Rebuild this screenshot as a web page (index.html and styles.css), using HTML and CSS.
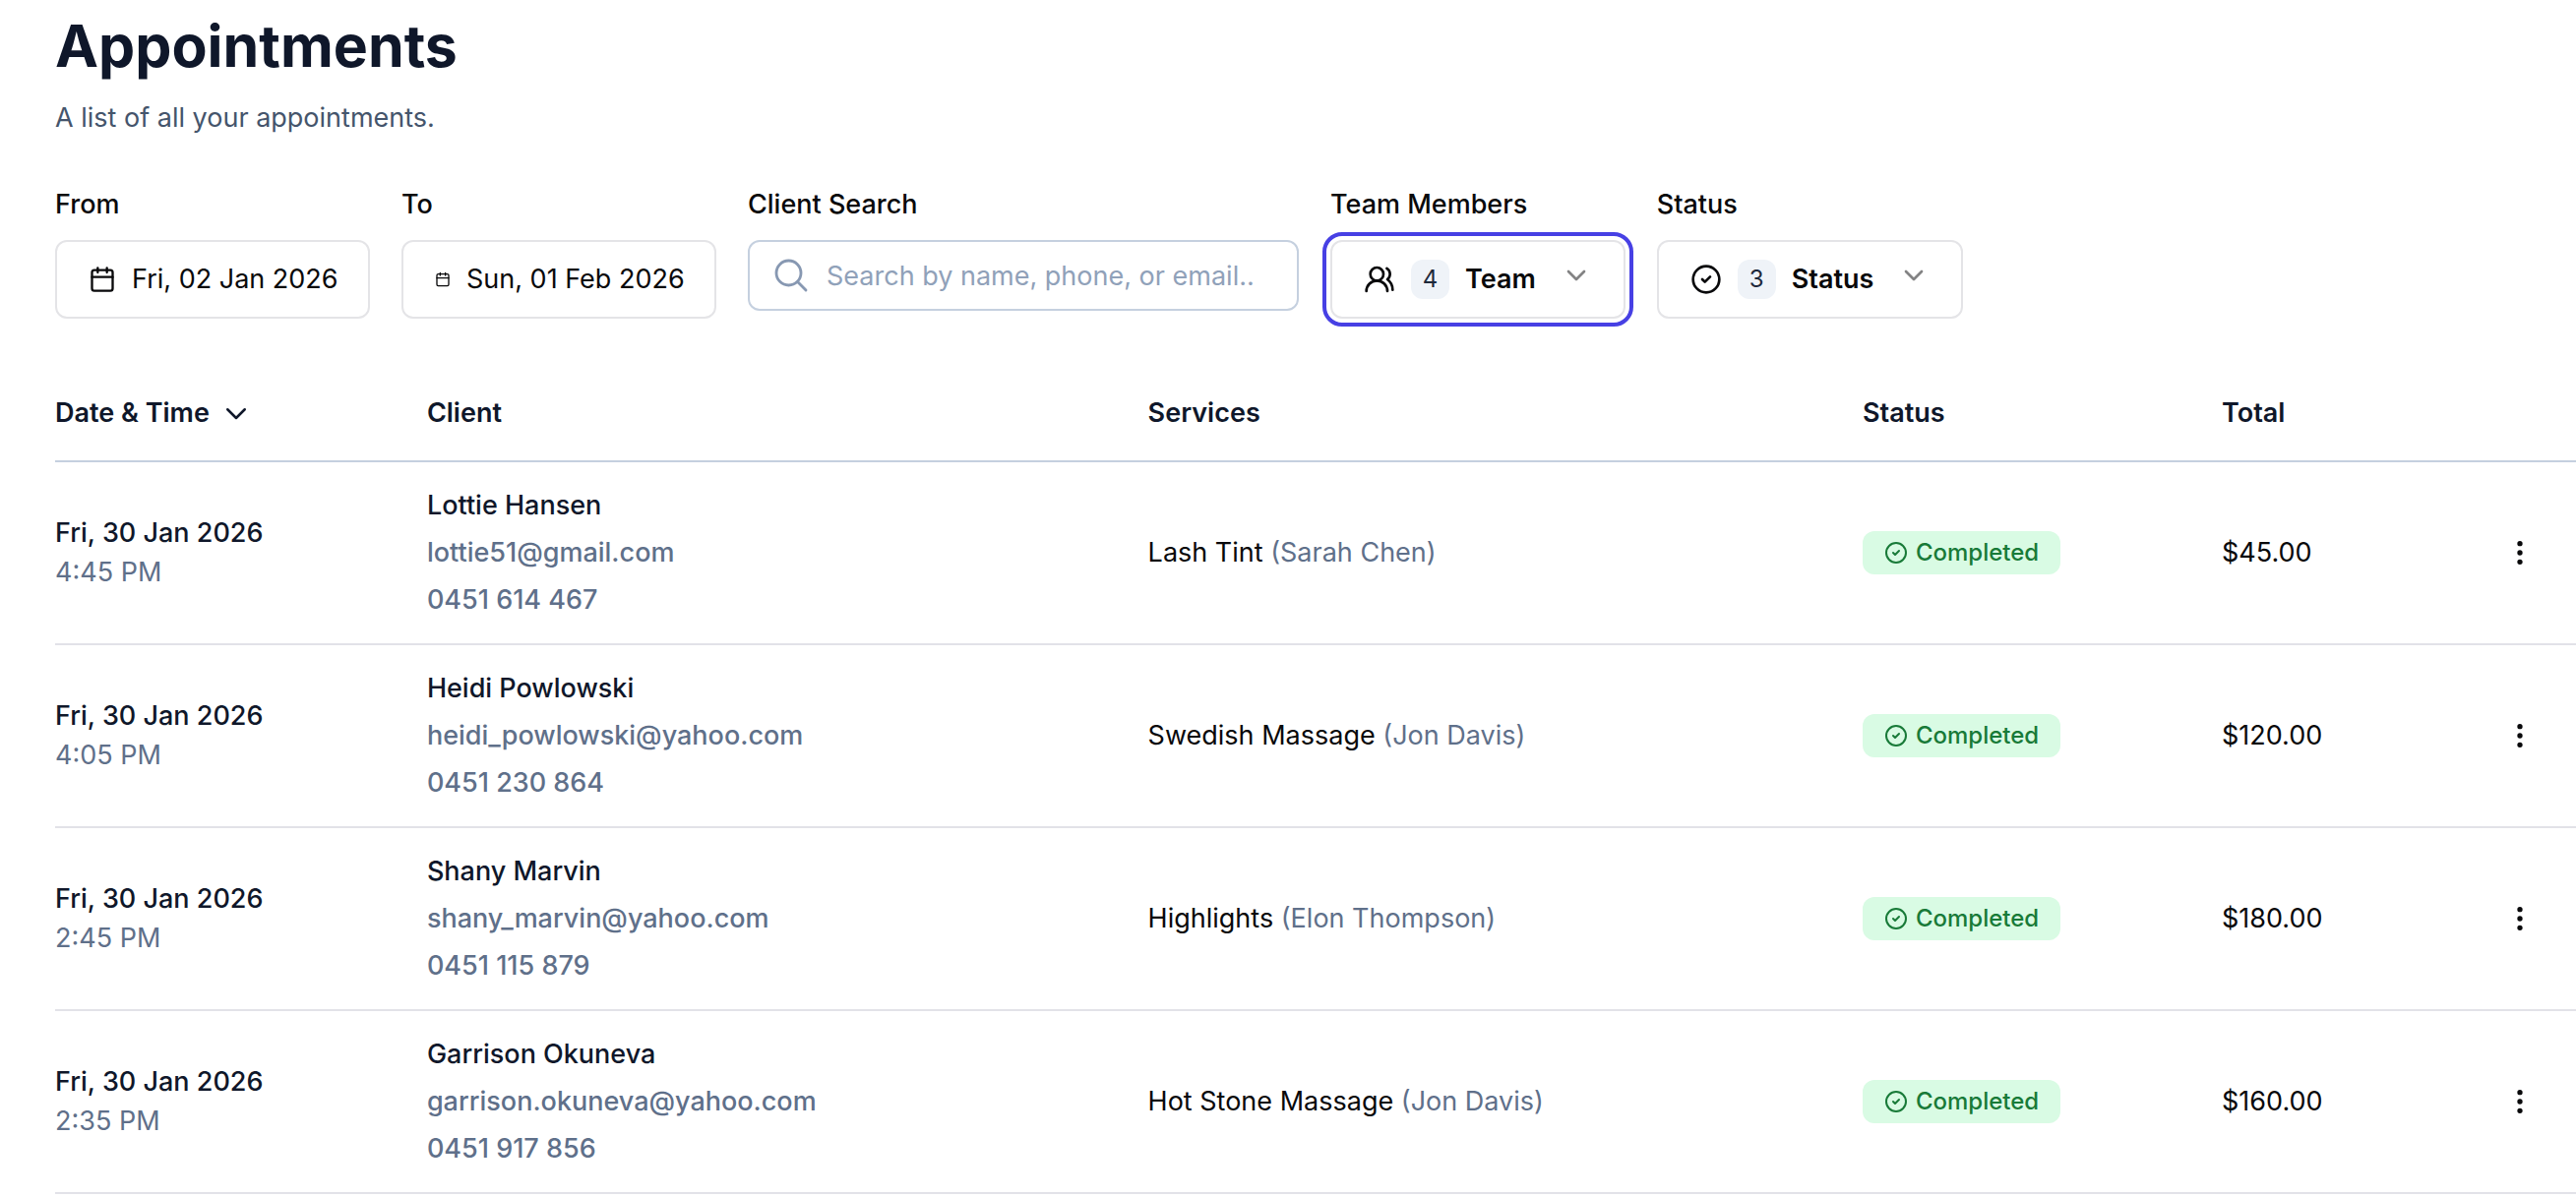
FILE: index.html
```
<!DOCTYPE html>
<html lang="en">
	<head>
		<meta charset="UTF-8">
		<title>Appointments</title>
		<link rel="stylesheet" href="styles.css">
	</head>
	<body>
		<!-- shared icons -->
		<svg class="sprite" aria-hidden="true">
			<symbol id="i-calendar" viewBox="0 0 24 24">
				<path d="M8 2v4M16 2v4M3 10h18"/>
				<rect x="3" y="4" width="18" height="18" rx="2"/>
			</symbol>
			<symbol id="i-search" viewBox="0 0 24 24">
				<path d="m21 21-5.197-5.197m0 0A7.5 7.5 0 1 0 5.196 5.196a7.5 7.5 0 0 0 10.607 10.607Z"/>
			</symbol>
			<symbol id="i-users" viewBox="0 0 24 24">
				<path d="M18 21a8 8 0 0 0-16 0"/>
				<circle cx="10" cy="8" r="5"/>
				<path d="M22 20c0-3.37-2-6.5-4-8a5 5 0 0 0-.45-8.3"/>
			</symbol>
			<symbol id="i-check" viewBox="0 0 24 24">
				<circle cx="12" cy="12" r="10"/>
				<path d="m9 12 2 2 4-4"/>
			</symbol>
			<symbol id="i-down" viewBox="0 0 24 24">
				<path d="m6 9 6 6 6-6"/>
			</symbol>
			<symbol id="i-sort" viewBox="0 0 24 24">
				<path d="m5 9 7 7 7-7"/>
			</symbol>
			<symbol id="i-dots" viewBox="0 0 24 24">
				<circle cx="12" cy="5" r="1"/>
				<circle cx="12" cy="12" r="1"/>
				<circle cx="12" cy="19" r="1"/>
			</symbol>
		</svg>

		<main class="page">
			<h1>Appointments</h1>
			<p class="intro">A list of all your appointments.</p>

			<form class="filters">
				<div class="field">
					<label for="from">From</label>
					<button type="button" id="from" class="btn date">
						<svg class="icon icon-cal"><use href="#i-calendar"/></svg>
						Fri, 02 Jan 2026
					</button>
				</div>
				<div class="field">
					<label for="to">To</label>
					<button type="button" id="to" class="btn date">
						<svg class="icon icon-small"><use href="#i-calendar"/></svg>
						Sun, 01 Feb 2026
					</button>
				</div>
				<div class="field">
					<label for="search">Client Search</label>
					<div class="search">
						<svg class="icon icon-search"><use href="#i-search"/></svg>
						<input type="text" id="search" placeholder="Search by name, phone, or email..">
					</div>
				</div>
				<div class="field">
					<label for="team">Team Members</label>
					<button type="button" id="team" class="btn drop focused">
						<svg class="icon"><use href="#i-users"/></svg>
						<span class="count">4</span>
						<span class="name">Team</span>
						<svg class="icon arrow"><use href="#i-down"/></svg>
					</button>
				</div>
				<div class="field">
					<label for="status">Status</label>
					<button type="button" id="status" class="btn drop">
						<svg class="icon"><use href="#i-check"/></svg>
						<span class="count">3</span>
						<span class="name">Status</span>
						<svg class="icon arrow"><use href="#i-down"/></svg>
					</button>
				</div>
			</form>

			<table class="list">
				<thead>
					<tr>
						<th class="c-date">
							<button type="button" class="sort">Date &amp; Time
								<svg class="icon"><use href="#i-sort"/></svg>
							</button>
						</th>
						<th class="c-client">Client</th>
						<th class="c-services">Services</th>
						<th class="c-status">Status</th>
						<th class="c-total">Total</th>
						<th class="c-menu"></th>
					</tr>
				</thead>
				<tbody>
					<tr>
						<td><div class="day">Fri, 30 Jan 2026</div><div class="time">4:45 PM</div></td>
						<td class="client">
							<div>Lottie Hansen</div>
							<a href="mailto:lottie51@gmail.com">lottie51@gmail.com</a>
							<a href="tel:0451614467">0451 614 467</a>
						</td>
						<td>Lash Tint <span class="staff">(Sarah Chen)</span></td>
						<td><span class="tag"><svg class="icon"><use href="#i-check"/></svg>Completed</span></td>
						<td>$45.00</td>
						<td><button type="button" class="menu" aria-label="Actions"><svg class="icon"><use href="#i-dots"/></svg></button></td>
					</tr>
					<tr>
						<td><div class="day">Fri, 30 Jan 2026</div><div class="time">4:05 PM</div></td>
						<td class="client">
							<div>Heidi Powlowski</div>
							<a href="mailto:heidi_powlowski@yahoo.com">heidi_powlowski@yahoo.com</a>
							<a href="tel:0451230864">0451 230 864</a>
						</td>
						<td>Swedish Massage <span class="staff">(Jon Davis)</span></td>
						<td><span class="tag"><svg class="icon"><use href="#i-check"/></svg>Completed</span></td>
						<td>$120.00</td>
						<td><button type="button" class="menu" aria-label="Actions"><svg class="icon"><use href="#i-dots"/></svg></button></td>
					</tr>
					<tr>
						<td><div class="day">Fri, 30 Jan 2026</div><div class="time">2:45 PM</div></td>
						<td class="client">
							<div>Shany Marvin</div>
							<a href="mailto:shany_marvin@yahoo.com">shany_marvin@yahoo.com</a>
							<a href="tel:0451115879">0451 115 879</a>
						</td>
						<td>Highlights <span class="staff">(Elon Thompson)</span></td>
						<td><span class="tag"><svg class="icon"><use href="#i-check"/></svg>Completed</span></td>
						<td>$180.00</td>
						<td><button type="button" class="menu" aria-label="Actions"><svg class="icon"><use href="#i-dots"/></svg></button></td>
					</tr>
					<tr>
						<td><div class="day">Fri, 30 Jan 2026</div><div class="time">2:35 PM</div></td>
						<td class="client">
							<div>Garrison Okuneva</div>
							<a href="mailto:garrison.okuneva@yahoo.com">garrison.okuneva@yahoo.com</a>
							<a href="tel:0451917856">0451 917 856</a>
						</td>
						<td>Hot Stone Massage <span class="staff">(Jon Davis)</span></td>
						<td><span class="tag"><svg class="icon"><use href="#i-check"/></svg>Completed</span></td>
						<td>$160.00</td>
						<td><button type="button" class="menu" aria-label="Actions"><svg class="icon"><use href="#i-dots"/></svg></button></td>
					</tr>
				</tbody>
			</table>
		</main>
	</body>
</html>
```
FILE: styles.css
```
*{
	box-sizing: border-box;
}
body{
	margin: 0;
	background: #fff;
	color: #09090b;
	font-family: "Inter", "Liberation Sans", sans-serif;
	font-size: 27px;
	line-height: 40px;
}
button, input{
	font: inherit;
	color: inherit;
}
.sprite{
	display: none;
}
.icon{
	width: 32px;
	height: 32px;
	flex: none;
	fill: none;
	stroke: currentColor;
	stroke-width: 2;
	stroke-linecap: round;
	stroke-linejoin: round;
}
.page{
	padding: 8px 0 0 56px;
}
h1{
	margin: 0;
	font-size: 59px;
	line-height: 78px;
	font-weight: 700;
	color: #0f172a;
}
.intro{
	margin: 14px 0 0;
	color: #45556c;
}

/* filters */
.filters{
	display: flex;
	flex-wrap: wrap;
	align-items: flex-start;
	gap: 32px;
	margin-top: 48px;
}
.field{
	display: flex;
	flex-direction: column;
	gap: 16px;
}
.field label{
	font-weight: 500;
}
.btn{
	display: flex;
	align-items: center;
	gap: 16px;
	padding: 18px 32px;
	border: 2px solid #e4e4e7;
	border-radius: 12px;
	background: #fff;
	white-space: nowrap;
}
.date{
	width: 320px;
}
.icon-cal{
	width: 28px;
	height: 28px;
}
.icon-small{
	width: 16px;
	height: 16px;
}
.focused{
	outline: 4px solid #4740e4;
	outline-offset: 4px;
}
.count{
	min-width: 39px;
	border-radius: 12px;
	background: #eff3f8;
	color: #1e293b;
	font-size: 24px;
	text-align: center;
}
.name{
	font-weight: 600;
	padding-right: 9px;
}
.arrow{
	align-self: flex-start;
	opacity: .5;
}
.search{
	position: relative;
	width: 560px;
}
.search input{
	display: block;
	width: 100%;
	height: 72px;
	padding: 0 24px 0 78px;
	border: 2px solid #c5d0df;
	border-radius: 12px;
	background: #fff;
}
.search input::placeholder{
	color: #90a1b9;
	opacity: 1;
}
.icon-search{
	position: absolute;
	top: 16px;
	left: 24px;
	width: 40px;
	height: 40px;
	stroke-width: 1.7;
	color: #8798b2;
}

/* table */
.list{
	width: 100%;
	margin-top: 48px;
	table-layout: fixed;
	border-spacing: 0;
}
.list th{
	padding: 28px 0;
	border-bottom: 2px solid #c5d0df;
	color: #0f172a;
	font-weight: 600;
	text-align: left;
}
.list td{
	padding: 20px 0;
	border-bottom: 2px solid #e2e2e8;
	vertical-align: middle;
}
.c-date{
	width: 14.75%;
}
.c-client{
	width: 28.6%;
}
.c-services{
	width: 28.35%;
}
.c-status{
	width: 14.25%;
}
.c-menu{
	width: 114px;
}
.sort{
	display: flex;
	align-items: center;
	gap: 12px;
	padding: 0;
	border: 0;
	background: none;
}
.sort .icon{
	width: 30px;
	height: 30px;
}
.day{
	color: #0f172a;
	font-weight: 500;
}
.time, .staff{
	color: #5f708a;
}
.client{
	color: #0f172a;
	font-weight: 500;
	line-height: 48px;
}
.client a{
	display: block;
	color: #5f708a;
	text-decoration: none;
}
.tag{
	display: flex;
	align-items: center;
	gap: 8px;
	width: fit-content;
	padding: 2px 22px;
	border-radius: 12px;
	background: #d9fbe4;
	color: #187a38;
	font-size: 24px;
	font-weight: 500;
}
.tag .icon{
	width: 24px;
	height: 24px;
}
.menu{
	display: flex;
	justify-content: center;
	width: 100%;
	padding: 0;
	border: 0;
	background: none;
}
```
